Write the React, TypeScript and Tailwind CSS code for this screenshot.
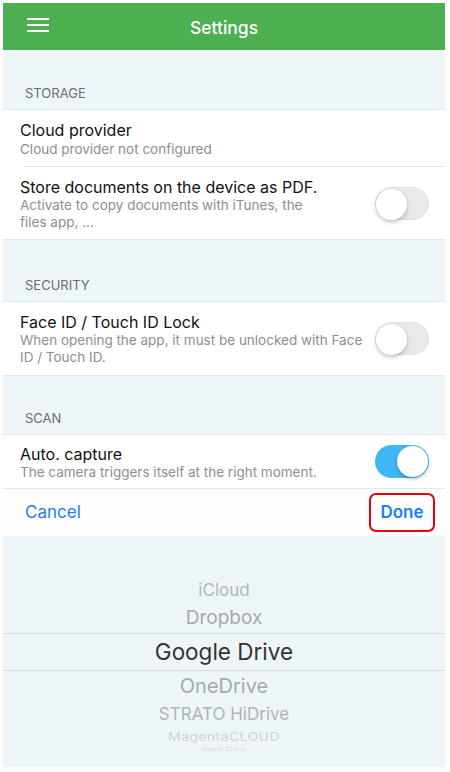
import React from 'react';

const Toggle: React.FC<{ on?: boolean }> = ({ on }) => (
  <div
    className={`relative w-[54px] h-[33px] rounded-full shrink-0 ${
      on ? 'bg-[#3fb8f5]' : 'bg-[#e9e9ea] border border-[#e2e2e2]'
    }`}
  >
    <div
      className={`absolute top-[1px] w-[31px] h-[31px] rounded-full bg-white shadow-[0_2px_4px_rgba(0,0,0,0.25)] ${
        on ? 'right-[1px]' : 'left-[0px]'
      }`}
    />
  </div>
);

const SectionLabel: React.FC<{ label: string; h: string }> = ({ label, h }) => (
  <div className={`${h} flex items-end px-[22px] pb-[6px] text-[13px] text-[#6d6d72] border-b border-[#e3e8eb]`}>
    {label}
  </div>
);

const App: React.FC = () => {
  return (
    <div className="w-[450px] h-[772px] bg-white pt-[3px] pl-[3px] pr-[5px] font-['Inter',sans-serif]">
      <div className="h-[764px] bg-[#eef5f8] flex flex-col overflow-hidden">
        {/* Header */}
        <div className="h-[47px] shrink-0 bg-[#4caf50] flex items-center relative">
          <div className="absolute left-[24px] top-[15px] flex flex-col gap-[4px]">
            <div className="w-[22px] h-[2px] bg-white" />
            <div className="w-[22px] h-[2px] bg-white" />
            <div className="w-[22px] h-[2px] bg-white" />
          </div>
          <div className="flex-1 text-center text-white text-[17.5px] font-medium pt-[3px]">Settings</div>
        </div>

        <SectionLabel label="STORAGE" h="h-[60px]" />
        <div className="bg-white">
          <div className="h-[56px] flex flex-col justify-center px-[17px] pt-[2px]">
            <div className="text-[16px] text-[#111] leading-[20px]">Cloud provider</div>
            <div className="text-[13.5px] text-[#8e8e93] leading-[18px]">Cloud provider not configured</div>
          </div>
          <div className="ml-[21px] border-t border-[#e3e8eb]" />
          <div className="h-[73px] flex items-center pl-[17px] pr-[16px] border-b border-[#e3e8eb]">
            <div className="flex-1 pt-[2px]">
              <div className="text-[16px] text-[#111] leading-[20px]">Store documents on the device as PDF.</div>
              <div className="text-[13.5px] text-[#8e8e93] leading-[17px] w-[300px]">
                Activate to copy documents with iTunes, the files app, ...
              </div>
            </div>
            <Toggle />
          </div>
        </div>

        <SectionLabel label="SECURITY" h="h-[62px]" />
        <div className="bg-white h-[74px] flex items-center pl-[17px] pr-[16px] border-b border-[#e3e8eb]">
          <div className="flex-1 pr-[4px]">
            <div className="text-[16px] text-[#111] leading-[20px]">Face ID / Touch ID Lock</div>
            <div className="text-[13.5px] text-[#8e8e93] leading-[17px]">
              When opening the app, it must be unlocked with Face ID / Touch ID.
            </div>
          </div>
          <Toggle />
        </div>

        <SectionLabel label="SCAN" h="h-[59px]" />
        <div className="bg-white h-[54px] flex items-center pl-[17px] pr-[16px] border-b border-[#e3e8eb]">
          <div className="flex-1 pt-[2px]">
            <div className="text-[16px] text-[#111] leading-[20px]">Auto. capture</div>
            <div className="text-[13.5px] text-[#8e8e93] leading-[17px]">The camera triggers itself at the right moment.</div>
          </div>
          <Toggle on />
        </div>

        {/* Picker toolbar */}
        <div className="h-[47px] shrink-0 bg-[#fdfdfd] flex items-center justify-between pl-[22px] pr-[10px]">
          <span className="text-[17px] text-[#1a80f5]">Cancel</span>
          <span className="h-[39px] w-[66px] flex items-center justify-center rounded-[7px] border-2 border-[#e8000b] text-[17px] font-semibold text-[#1a80f5]">
            Done
          </span>
        </div>

        {/* Picker wheel */}
        <div className="flex-1 flex flex-col items-center pt-[42px]">
          <div className="h-[26px] flex items-center text-[17px] text-[#b3b7ba]">iCloud</div>
          <div className="h-[29px] flex items-center text-[19px] text-[#a6a9ab]">Dropbox</div>
          <div className="w-full h-[38px] flex items-center justify-center border-y border-[#d6dadd] text-[22.5px] text-[#333]">
            Google Drive
          </div>
          <div className="h-[30px] flex items-center text-[20px] text-[#a6a9ab]">OneDrive</div>
          <div className="h-[27px] flex items-center text-[17px] text-[#b0b3b6]">STRATO HiDrive</div>
          <div className="h-[17px] flex items-center text-[14px] text-[#cfd2d4] tracking-[0.4px] scale-y-[0.8]">MagentaCLOUD</div>
          <div className="h-[8px] flex items-center text-[10px] text-[#dadcde] tracking-[1px] scale-y-[0.5]">WebDav</div>
        </div>
      </div>
    </div>
  );
};

export default App;
